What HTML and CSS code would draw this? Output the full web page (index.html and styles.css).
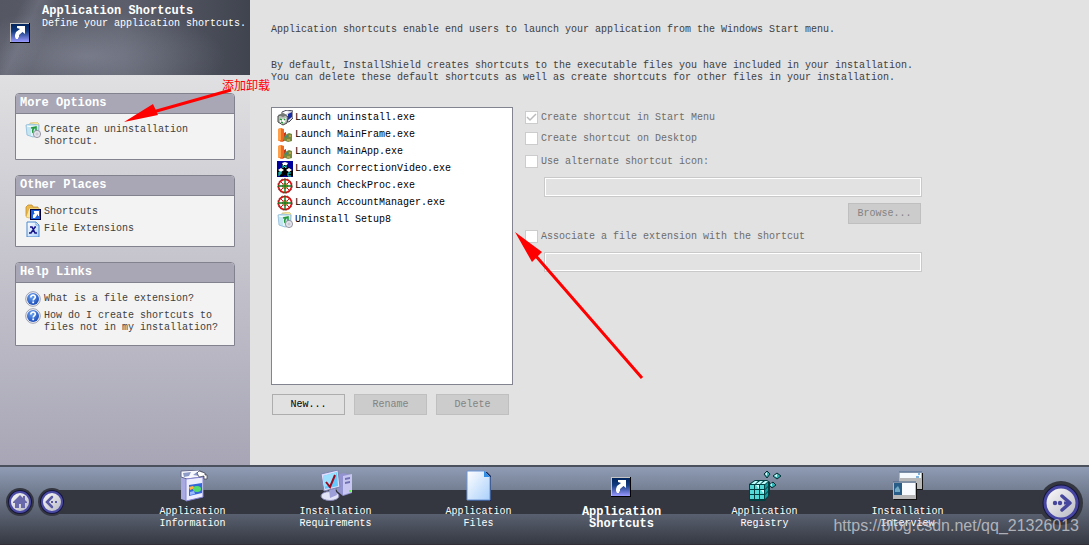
FILE: index.html
```
<!DOCTYPE html>
<html lang="en">

<head>
    <meta charset="UTF-8">
    <meta name="viewport" content="width=device-width, initial-scale=1.0">
    <title>Application Shortcuts</title>
    <link rel="stylesheet" href="styles.css">
</head>

<body>
    <!-- shared icons -->
    <svg class="sprite" aria-hidden="true">
        <defs>
            <linearGradient id="g-blue" x1="0" y1="0" x2="0" y2="1">
                <stop offset="0" stop-color="#02255c" />
                <stop offset=".4" stop-color="#123a80" />
                <stop offset="1" stop-color="#9a9aff" />
            </linearGradient>
            <linearGradient id="g-page" x1="0" y1="0" x2="1" y2="1">
                <stop offset="0" stop-color="#ffffff" />
                <stop offset="1" stop-color="#aad0fb" />
            </linearGradient>
            <linearGradient id="g-metal" x1="0" y1="0" x2="1" y2="1">
                <stop offset="0" stop-color="#ffffff" />
                <stop offset="1" stop-color="#b4b4c0" />
            </linearGradient>
            <radialGradient id="g-help" cx=".4" cy=".3" r=".8">
                <stop offset="0" stop-color="#6ea6f4" />
                <stop offset="1" stop-color="#103fae" />
            </radialGradient>
        </defs>
        <symbol id="i-shortcut" viewBox="0 0 20 20">
            <path d="M0 0h20v20H0z" fill="#000" />
            <path d="M0 0h19v19H0z" fill="#c4c4c4" />
            <path d="M1 1h18v18H1z" fill="url(#g-blue)" />
            <path d="M7 3h8v8l-2.500-2L9 12v2l-1 1v1H6l-1-2v-2l1-3 4-3-3-1z" fill="#fff" />
        </symbol>
        <symbol id="i-uninstall" viewBox="0 0 16 16">
            <path d="M5 1l7-1 2 2v9H5z" fill="#f7e7a0" stroke="#d6bd69" stroke-width=".6" />
            <path d="M1 3l5-1 8 1-1 11-5 1-6-2z" fill="#c5e5f1" stroke="#8db9d7" stroke-width=".8" />
            <path d="M2 4l5 1 6-1M7 5v9" fill="none" stroke="#fff" />
            <path d="M6 6l5-1v4M11 5c-3 1-4 3-3 6" fill="none" stroke="#239b3c" stroke-width="1.500" />
            <circle cx="12" cy="12" r="3.600" fill="#e4e4ee" stroke="#82828e" stroke-width=".8" />
            <circle cx="12" cy="12" r="1" fill="#fff" stroke="#8c8c98" stroke-width=".5" />
        </symbol>
        <symbol id="i-folder" viewBox="0 0 16 16">
            <path d="M1 3l2-2h4l1 2h5v9H1z" fill="#ebb84c" stroke="#c38c2a" stroke-width=".8" />
            <path d="M4 4h10v8l-10 2-3-1z" fill="#fbe596" stroke="#d1a243" stroke-width=".6" />
            <path d="M5 5h11v11H5z" fill="#00003c" />
            <path d="M6 6h9v9H6z" fill="#1c61dc" />
            <path d="M9 7h5v5h-1v-2l-3 4H8v-3l2-2H9z" fill="#fff" />
        </symbol>
        <symbol id="i-ext" viewBox="0 0 16 16">
            <path d="M2 1h9l3 3v12H2z" fill="url(#g-page)" stroke="#4a87cc" />
            <path d="M11 1v3h3z" fill="#fff" stroke="#4a87cc" stroke-width=".7" />
            <path d="M5 6h2l3 6h2M11 6h-1l-4 6H4" fill="none" stroke="#1a1588" stroke-width="1.600" />
        </symbol>
        <symbol id="i-help" viewBox="0 0 16 16">
            <circle cx="8" cy="8" r="7.300" fill="#f4f4f8" stroke="#9da1b0" stroke-width="1" />
            <circle cx="8" cy="8" r="6" fill="url(#g-help)" />
            <path d="M5.800 6.400c0-3.200 4.700-3 4.500-.2C10.200 7.600 8.200 7.700 8.200 9.500" fill="none" stroke="#fff" stroke-width="1.600" />
            <path d="M7.300 10.500h1.800v1.700H7.300z" fill="#fff" />
        </symbol>
        <symbol id="i-setup" viewBox="0 0 16 16">
            <path d="M5 2l5-2 6 1v7l-4 4-7-2z" fill="#d8d8e6" stroke="#484858" />
            <path d="M11 4l4-2v5l-4 3z" fill="#1b2ba0" />
            <path d="M5 3l4-2 3 1-4 3z" fill="#fff" />
            <path d="M1 6l6-2 4 3-1 6-4 2-5-3z" fill="#b9beba" stroke="#424644" />
            <path d="M1 5l5-2 4 2-4 2z" fill="#747a76" />
            <path d="M3 8l3 1 3-1-1 4-3 2-2-2z" fill="#fff" />
            <path d="M3 9l2 1M7 9l1 1M4 12l2 1" stroke="#2b963b" stroke-width="1.500" />
        </symbol>
        <symbol id="i-app" viewBox="0 0 16 16">
            <path d="M1 2l3-1 3 1v12l-3 1-3-2z" fill="#ef6824" />
            <path d="M1 2l3-1v12l-3 1z" fill="#ffa04c" />
            <path d="M7 6l2-1v8l-4 2 2-3z" fill="#ca3517" />
            <path d="M8 8l4-2 3 1v7l-4 1-5-2z" fill="#758a3c" />
            <path d="M8 9l3-1v2l-3 1z" fill="#348a92" />
            <path d="M12 8h2v2h-2zM10 12h3v2h-3z" fill="#b2a34e" />
        </symbol>
        <symbol id="i-video" viewBox="0 0 16 16">
            <path d="M0 0h16v16H0z" fill="#00009c" />
            <path d="M5 2l3-1 3 1v4l3 2 2 2v5l-5 1-3-2-4 2-4-2V9l5-2z" fill="#000" />
            <path d="M5 2l3-1 3 1-1 2H6zM1 9l3-2 3 2-3 2zM9 9l3-2 3 2-3 2z" fill="#fff" />
            <path d="M6 7V4l3 3V4M2 15v-4h2v2H2M14 12h-3v3h3" fill="none" stroke="#19e4e8" />
        </symbol>
        <symbol id="i-target" viewBox="0 0 16 16">
            <circle cx="8" cy="8" r="6.500" fill="#fff" stroke="#e10c0c" stroke-width="1.500" />
            <circle cx="8" cy="8" r="7.300" fill="none" stroke="#521010" stroke-width=".6" stroke-dasharray="2 1" />
            <path d="M4 4l2 2M10 6l2-2M4 12l2-2M10 10l2 2" stroke="#bc2424" />
            <circle cx="8" cy="8" r="2.500" fill="#ecec40" stroke="#b62618" stroke-width=".8" />
            <path d="M8 1v14M1 8h14" stroke="#137620" stroke-width="1.400" />
        </symbol>
    </svg>

    <div class="workspace">
        <aside class="sidebar">
            <header class="banner">
                <svg class="banner-icon"><use href="#i-shortcut" /></svg>
                <div>
                    <h1 class="banner-title">Application Shortcuts</h1>
                    <p class="banner-text">Define your application shortcuts.</p>
                </div>
            </header>

            <div class="panels">
                <section class="panel">
                    <h2 class="panel-title">More Options</h2>
                    <div class="panel-body">
                        <a class="link" href="#"><svg class="icon"><use href="#i-uninstall" /></svg><span>Create an uninstallation<br>shortcut.</span></a>
                    </div>
                </section>
                <section class="panel">
                    <h2 class="panel-title">Other Places</h2>
                    <div class="panel-body">
                        <a class="link" href="#"><svg class="icon"><use href="#i-folder" /></svg><span>Shortcuts</span></a>
                        <a class="link" href="#"><svg class="icon"><use href="#i-ext" /></svg><span>File Extensions</span></a>
                    </div>
                </section>
                <section class="panel">
                    <h2 class="panel-title">Help Links</h2>
                    <div class="panel-body">
                        <a class="link" href="#"><svg class="icon"><use href="#i-help" /></svg><span>What is a file extension?</span></a>
                        <a class="link" href="#"><svg class="icon"><use href="#i-help" /></svg><span>How do I create shortcuts to<br>files not in my installation?</span></a>
                    </div>
                </section>
            </div>
        </aside>

        <main class="content">
            <p class="intro">Application shortcuts enable end users to launch your application from the Windows Start menu.</p>
            <p class="intro">By default, InstallShield creates shortcuts to the executable files you have included in your installation.<br>You can delete these default shortcuts as well as create shortcuts for other files in your installation.</p>

            <div class="editor">
                <div class="list-col">
                    <ul class="list">
                        <li class="list-item"><svg class="icon"><use href="#i-setup" /></svg>Launch uninstall.exe</li>
                        <li class="list-item"><svg class="icon"><use href="#i-app" /></svg>Launch MainFrame.exe</li>
                        <li class="list-item"><svg class="icon"><use href="#i-app" /></svg>Launch MainApp.exe</li>
                        <li class="list-item"><svg class="icon"><use href="#i-video" /></svg>Launch CorrectionVideo.exe</li>
                        <li class="list-item"><svg class="icon"><use href="#i-target" /></svg>Launch CheckProc.exe</li>
                        <li class="list-item"><svg class="icon"><use href="#i-target" /></svg>Launch AccountManager.exe</li>
                        <li class="list-item"><svg class="icon"><use href="#i-uninstall" /></svg>Uninstall Setup8</li>
                    </ul>
                    <div class="list-actions">
                        <button class="btn" type="button">New...</button>
                        <button class="btn" type="button" disabled>Rename</button>
                        <button class="btn" type="button" disabled>Delete</button>
                    </div>
                </div>

                <form class="options">
                    <label class="check"><input type="checkbox" checked disabled>Create shortcut in Start Menu</label>
                    <label class="check"><input type="checkbox" disabled>Create shortcut on Desktop</label>
                    <div class="option-group">
                        <label class="check"><input type="checkbox" disabled>Use alternate shortcut icon:</label>
                        <input class="field" type="text" aria-label="Alternate shortcut icon" disabled>
                        <button class="btn btn-browse" type="button" disabled>Browse...</button>
                    </div>
                    <div class="option-group">
                        <label class="check"><input type="checkbox" disabled>Associate a file extension with the shortcut</label>
                        <input class="field" type="text" aria-label="File extension" disabled>
                    </div>
                </form>
            </div>
        </main>
    </div>

    <footer class="footer">
        <div class="footer-left">
            <button class="round" type="button" aria-label="Home">
                <svg viewBox="0 0 28 28">
                    <circle cx="14" cy="14" r="14" fill="#343740" />
                    <circle cx="14" cy="14" r="12" fill="#15153c" />
                    <circle cx="14" cy="14" r="10" fill="url(#g-metal)" stroke="#4b4ba6" stroke-width="2" />
                    <path d="M7 14l7-7 3 3V8h2v4l2 2v1h-2v5h-4v-4h-2v4H9v-5H7z" fill="#6868aa" />
                </svg>
            </button>
            <button class="round" type="button" aria-label="Back">
                <svg viewBox="0 0 28 28">
                    <circle cx="14" cy="14" r="14" fill="#343740" />
                    <circle cx="14" cy="14" r="12" fill="#15153c" />
                    <circle cx="14" cy="14" r="10" fill="url(#g-metal)" stroke="#4b4ba6" stroke-width="2" />
                    <path d="M14 9l-5 5 5 5" fill="none" stroke="#5858a4" stroke-width="2.500" stroke-linecap="round" />
                    <path d="M13 13h2v2h-2zM17 13h2v2h-2z" fill="#5858a4" />
                </svg>
            </button>
        </div>

        <nav class="steps">
            <a class="step" href="#">
                <svg class="step-icon" viewBox="0 0 32 32">
                    <path d="M4 3l6 2v26l-6-2z" fill="#a9a9e2" />
                    <path d="M4 1l18-1 5 3-1 4-16 2-6-2z" fill="#f8f8ff" stroke="#656b8c" />
                    <path d="M6 3l8-1-2 4-5 1zM16 5l4-3 7 1-4 3z" fill="#8c9ac6" />
                    <path d="M9 9l17-2v20L9 31z" fill="#ececff" stroke="#8585d2" />
                    <path d="M12 15l13-2v10l-13 3z" fill="#3467d8" />
                    <path d="M12 17l4-1 2 2-5 2z" fill="#ffb43f" />
                    <ellipse cx="20" cy="19" rx="4" ry="3" fill="#52dc6d" />
                    <path d="M13 22l4-1 1 3-5 1z" fill="#9abaff" />
                    <path d="M20 3l2-2 6 2v2h2v4h-3V6l-5 1z" fill="#fff" stroke="#34384a" stroke-width=".7" />
                </svg>
                <span>Application<br>Information</span>
            </a>
            <a class="step" href="#">
                <svg class="step-icon" viewBox="0 0 32 32">
                    <path d="M17 5l6-2 9 2v18l-9 3-6-5z" fill="#9292cf" />
                    <path d="M23 6l9-2v18l-9 3z" fill="#c6c6f0" />
                    <path d="M25 8l5-1v2l-5 1zM25 12l5-1v2l-5 1z" fill="#7070b2" />
                    <path d="M29 20h2v2h-2z" fill="#66ed59" />
                    <ellipse cx="10" cy="26" rx="9" ry="4.500" fill="#e4e4f8" stroke="#8989b5" />
                    <path d="M9 19l6-1 2 7-7 3z" fill="#9d9dd7" />
                    <path d="M1 4l17-4 2 17-16 4z" fill="#dedefc" stroke="#7c84b1" />
                    <path d="M3 6l14-4 1 14-13 3z" fill="#67c8fc" />
                    <path d="M3 6l14-4-5 12-8 3z" fill="#9be1ff" />
                    <path d="M6 12l4 5 5-12" fill="none" stroke="#9c0c20" stroke-width="2" />
                </svg>
                <span>Installation<br>Requirements</span>
            </a>
            <a class="step" href="#">
                <svg class="step-icon" viewBox="0 0 32 32">
                    <path d="M6 2h18l4 4v25H6z" fill="#182755" />
                    <path d="M4 1h17l6 6v23H4z" fill="url(#g-page)" stroke="#6b95d5" />
                    <path d="M21 1v6h6z" fill="#318de4" />
                </svg>
                <span>Application<br>Files</span>
            </a>
            <a class="step active" href="#" aria-current="step">
                <svg class="step-icon" viewBox="0 0 32 32"><use href="#i-shortcut" x="5" y="7" width="20" height="20" /></svg>
                <span>Application<br>Shortcuts</span>
            </a>
            <a class="step" href="#">
                <svg class="step-icon" viewBox="0 0 32 32">
                    <path d="M0 14l6-4h12l3 2v12l-5 7H0z" fill="#003f42" />
                    <path d="M1 15h4v4H1zM6 15h4v4H6zM11 15h4v4h-4zM1 20h4v4H1zM6 20h4v4H6zM11 20h4v4h-4zM1 25h4v4H1zM6 25h4v4H6zM11 25h4v4h-4z" fill="#54dad6" />
                    <path d="M2 14l4-3h3l-3 3zM7 14l4-3h3l-3 3zM12 14l4-3h3l-3 3z" fill="#bdffff" />
                    <path d="M16 15l3-3v4l-3 3zM16 20l3-3v4l-3 3zM16 25l3-3v4l-3 3z" fill="#13989b" />
                    <path d="M18 1l3 3-3 4-3-4zM28 3l4 3-4 3-4-3zM24 12l3 3-4 3-3-3z" fill="#32b3b5" stroke="#072d32" />
                    <path d="M18 2v4l-2-2zM28 4v3l-3-1zM23 13v3l-2-1zM7 15l3 4V15zM12 20l3 4v-4z" fill="#d5ffff" />
                </svg>
                <span>Application<br>Registry</span>
            </a>
            <a class="step" href="#">
                <svg class="step-icon" viewBox="0 0 32 32">
                    <path d="M8 3h23v17H8z" fill="#111" />
                    <path d="M7 2h23v17H7z" fill="#b8b8b8" />
                    <path d="M8 3h21v5H8z" fill="#f5faff" />
                    <path d="M7 2h23" stroke="#456791" />
                    <path d="M26 3h2v2h-2zM24 6h3v2h-3z" fill="#80b4df" />
                    <path d="M2 13h23v17H2z" fill="#111" />
                    <path d="M1 12h23v17H1z" fill="#b8b8b8" />
                    <path d="M2 13h8v12H2z" fill="#285d87" />
                    <path d="M3 19l3-3 2 4v2H3z" fill="#74a9c4" />
                    <path d="M10 13h13v12H10z" fill="#f8fbff" />
                    <path d="M1 12h23" stroke="#456791" />
                </svg>
                <span>Installation<br>Interview</span>
            </a>
        </nav>

        <div class="footer-right">
            <button class="round round-next" type="button" aria-label="Next">
                <svg viewBox="0 0 44 44">
                    <circle cx="22" cy="22" r="22" fill="#343740" />
                    <circle cx="22" cy="22" r="18.500" fill="#15153c" />
                    <circle cx="22" cy="22" r="16" fill="url(#g-metal)" stroke="#4646a2" stroke-width="3" />
                    <path d="M23 15l8 7-8 7" fill="none" stroke="#46469c" stroke-width="3.500" stroke-linecap="round" stroke-linejoin="round" />
                    <path d="M25 22h4" stroke="#46469c" stroke-width="3" />
                    <circle cx="16" cy="22" r="2.200" fill="#46469c" />
                    <circle cx="21" cy="22" r="2.200" fill="#46469c" />
                </svg>
            </button>
        </div>
        <span class="watermark">https://blog.csdn.net/qq_21326013</span>
    </footer>

    <!-- red notes drawn over the window -->
    <svg class="notes" width="660" height="400" aria-hidden="true">
        <path d="M153 112L231 90M535 255L642 378" fill="none" stroke="#f00" stroke-width="3" />
        <path d="M124 122l29-18 5 11zM515 232l27 20-10 10z" fill="#f00" />
    </svg>
    <span class="note-text" lang="zh">添加卸载</span>
</body>

</html>
```
FILE: styles.css
```
* {
    box-sizing: border-box;
}

body {
    margin: 0;
    min-height: 100vh;
    display: flex;
    flex-direction: column;
    position: relative;
    background: #e2e2e2;
    color: #404040;
    font: 10px/12px "Liberation Mono", monospace;
}

h1,
h2,
p,
ul {
    margin: 0;
    padding: 0;
}

a {
    color: inherit;
    text-decoration: none;
}

.sprite {
    position: absolute;
    width: 0;
    height: 0;
}

.icon {
    width: 16px;
    height: 16px;
    flex: none;
}

.workspace {
    flex: 1;
    display: flex;
}

/* sidebar */
.sidebar {
    width: 250px;
    flex: none;
    display: flex;
    flex-direction: column;
}

.banner {
    height: 75px;
    display: flex;
    gap: 12px;
    padding: 5px 0 0 10px;
    color: #fff;
    white-space: nowrap;
    background:
        radial-gradient(ellipse at 35% 75%, rgba(150, 153, 170, 0.5), transparent 60%),
        linear-gradient(115deg, transparent 8%, rgba(140, 143, 160, 0.3) 14%, transparent 22%),
        linear-gradient(90deg, #555763, #5c5f6b 50%, #40444f);
}

.banner-icon {
    width: 20px;
    height: 20px;
    margin-top: 18px;
}

.banner-title {
    font-size: 12px;
    line-height: 13px;
}

.panels {
    flex: 1;
    display: flex;
    flex-direction: column;
    gap: 15px;
    padding: 18px 15px;
    background: linear-gradient(#e0e0e2, #a8a6b6);
}

.panel {
    border: 1px solid #82828f;
    border-radius: 4px 4px 0 0;
    background: #f3f3f3;
    overflow: hidden;
}

.panel-title {
    padding: 0 4px;
    border-bottom: 1px solid #82828f;
    background: #a9a7b6;
    color: #fff;
    font-size: 12px;
    line-height: 19px;
}

.panel-body {
    padding: 8px 9px;
}

.link {
    display: flex;
    gap: 3px;
    min-height: 17px;
    white-space: nowrap;
}

.link span {
    padding: 2px 0 3px;
}

.link:hover {
    text-decoration: underline;
}

/* main area */
.content {
    flex: 1;
    min-width: 0;
    padding: 24px 21px;
}

.intro + .intro {
    margin-top: 24px;
}

.editor {
    display: flex;
    gap: 12px;
    margin-top: 23px;
}

.list-col {
    width: 242px;
    flex: none;
}

.list {
    height: 278px;
    padding: 1px 5px;
    border: 1px solid #82848f;
    background: #fff;
    color: #000;
    list-style: none;
}

.list-item {
    display: flex;
    align-items: center;
    gap: 2px;
    height: 17px;
    white-space: nowrap;
}

.list-actions {
    display: flex;
    gap: 9px;
    margin-top: 9px;
    padding-left: 1px;
}

.btn {
    width: 73px;
    height: 21px;
    padding: 0;
    border: 1px solid #adadad;
    background: #e1e1e1;
    color: #000;
    font: inherit;
}

.btn:disabled {
    border-color: #bfbfbf;
    background: #ccc;
    color: #838383;
}

.options {
    flex: 1;
    max-width: 397px;
    padding-top: 4px;
    color: #6d6d6d;
}

.check {
    display: flex;
    align-items: center;
    gap: 3px;
    height: 13px;
}

.check + .check {
    margin-top: 8px;
}

.check input {
    appearance: none;
    width: 13px;
    height: 13px;
    margin: 0;
    border: 1px solid #ccc;
    background: #fff;
}

.check input:checked {
    background: #fff url("data:image/svg+xml,%3Csvg xmlns='http://www.w3.org/2000/svg' viewBox='0 0 11 11'%3E%3Cpath d='M1 5l3 3 6-6' fill='none' stroke='%23bbb' stroke-width='1.5'/%3E%3C/svg%3E");
}

.option-group {
    display: flex;
    flex-direction: column;
    margin-top: 6px;
}

.check + .option-group {
    margin-top: 10px;
}

.field {
    height: 20px;
    margin: 9px 0 0 19px;
    padding: 0 4px;
    border: 1px solid #c9c9c9;
    background: transparent;
    box-shadow: inset 0 0 0 1px #fff;
    font: inherit;
}

.btn-browse {
    align-self: flex-end;
    margin: 6px 1px 0 0;
}

/* bottom bar */
.footer {
    position: relative;
    display: flex;
    height: 80px;
    border-top: 2px solid #4b515d;
    border-bottom: 1px solid #332f38;
    background:
        linear-gradient(#343740, #343740) no-repeat 52px 23px / calc(100% - 80px) 24px,
        linear-gradient(#8f9cb5, #5a6170 60%, #353942);
}

.footer-left {
    width: 121px;
    display: flex;
    gap: 4px;
    padding: 21px 0 0 6px;
}

.footer-right {
    width: 110px;
    display: flex;
    justify-content: flex-end;
    padding: 14px 6px 0 0;
}

.round {
    width: 28px;
    height: 28px;
    padding: 0;
    border: 0;
    border-radius: 50%;
    background: none;
    cursor: pointer;
}

.round svg {
    display: block;
}

.round-next {
    width: 44px;
    height: 44px;
}

.steps {
    flex: 1;
    display: grid;
    grid-template-columns: repeat(6, 1fr);
}

.step {
    display: flex;
    flex-direction: column;
    align-items: center;
    gap: 4px;
    padding-top: 3px;
    color: #fff;
    text-align: center;
}

.step-icon {
    width: 32px;
    height: 32px;
}

.step.active {
    font-size: 12px;
    font-weight: bold;
}

.watermark {
    position: absolute;
    right: 10px;
    bottom: 9px;
    color: rgba(205, 205, 210, 0.8);
    font: 16px/18px "Liberation Sans", sans-serif;
    pointer-events: none;
}

/* notes */
.notes {
    position: absolute;
    top: 0;
    left: 0;
    pointer-events: none;
}

.note-text {
    position: absolute;
    top: 79px;
    left: 222px;
    color: #f00;
    font: 12px/15px "Liberation Sans", "Noto Sans CJK SC", sans-serif;
}
```
